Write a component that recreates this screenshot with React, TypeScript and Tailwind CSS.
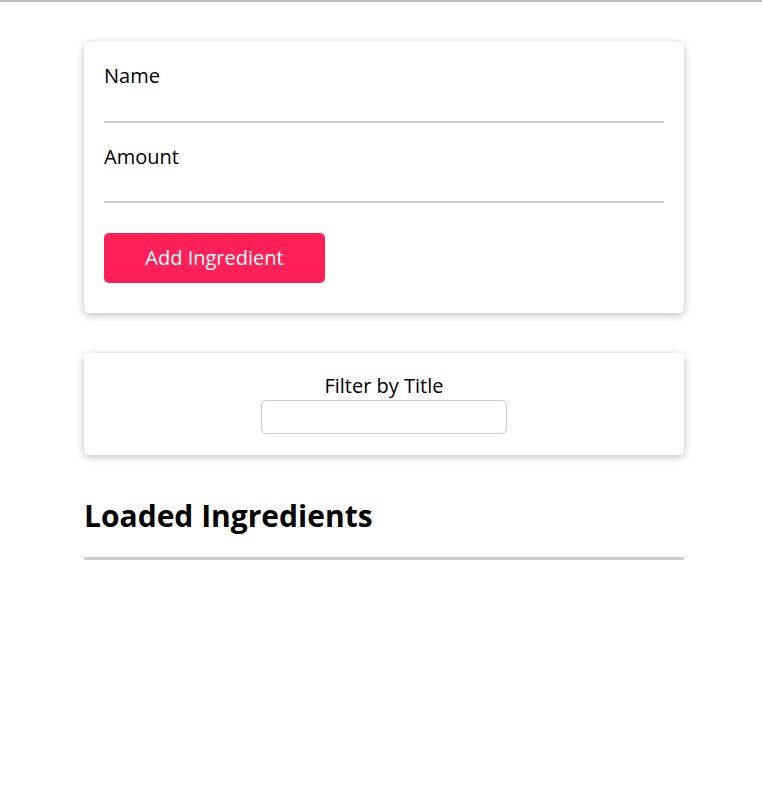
import { useState } from "react";

// Ingredient form + filter card + loaded list heading.
// Cards are centred 600px panels, 40px apart.
export default function App() {
  const [name, setName] = useState("");
  const [amount, setAmount] = useState("");
  const [filter, setFilter] = useState("");

  return (
    <div
      className="min-h-screen bg-white pl-[6px] text-black"
      style={{ fontFamily: "'Open Sans', 'Noto Sans', sans-serif" }}
    >
      <div className="-ml-[6px] h-[2px] bg-[#bdbdbd]" />

      <section className="mx-auto mt-10 w-[600px]">
        <div className="rounded-[5px] bg-white px-5 pt-5 pb-[30px] shadow-[0_2px_8px_rgba(0,0,0,0.26)]">
          <form onSubmit={(e) => e.preventDefault()}>
            <div className="mb-[20px]">
              <label htmlFor="title" className="block text-[20px] leading-[27px]">
                Name
              </label>
              <input
                id="title"
                type="text"
                value={name}
                onChange={(e) => setName(e.target.value)}
                className="block h-[34px] w-full border-b-2 border-[#ccc] bg-transparent text-[18px] outline-none"
              />
            </div>
            <div>
              <label htmlFor="amount" className="block text-[20px] leading-[27px]">
                Amount
              </label>
              <input
                id="amount"
                type="number"
                value={amount}
                onChange={(e) => setAmount(e.target.value)}
                className="block h-[33px] w-full border-b-2 border-[#ccc] bg-transparent text-[18px] outline-none"
              />
            </div>
            <div className="mt-[30px]">
              <button
                type="submit"
                className="h-[50px] w-[221px] rounded-[5px] bg-[#ff2058] text-[20px] text-white"
              >
                Add Ingredient
              </button>
            </div>
          </form>
        </div>
      </section>

      <section className="mx-auto mt-10 w-[600px]">
        <div className="flex flex-col items-center rounded-[5px] bg-white px-5 pt-[19px] pb-[21px] shadow-[0_2px_8px_rgba(0,0,0,0.26)]">
          <label htmlFor="filter" className="block text-[20px] leading-[27px]">
            Filter by Title
          </label>
          <input
            id="filter"
            type="text"
            value={filter}
            onChange={(e) => setFilter(e.target.value)}
            className="mt-[1px] h-[34px] w-[246px] rounded-[5px] border border-[#ccc] px-2 text-[16px] outline-none"
          />
        </div>
      </section>

      <section className="mx-auto mt-10 w-[600px]">
        <h2 className="border-b-[3px] border-[#ccc] pb-[21px] text-[30px] font-bold leading-[41px]">
          Loaded Ingredients
        </h2>
      </section>
    </div>
  );
}
